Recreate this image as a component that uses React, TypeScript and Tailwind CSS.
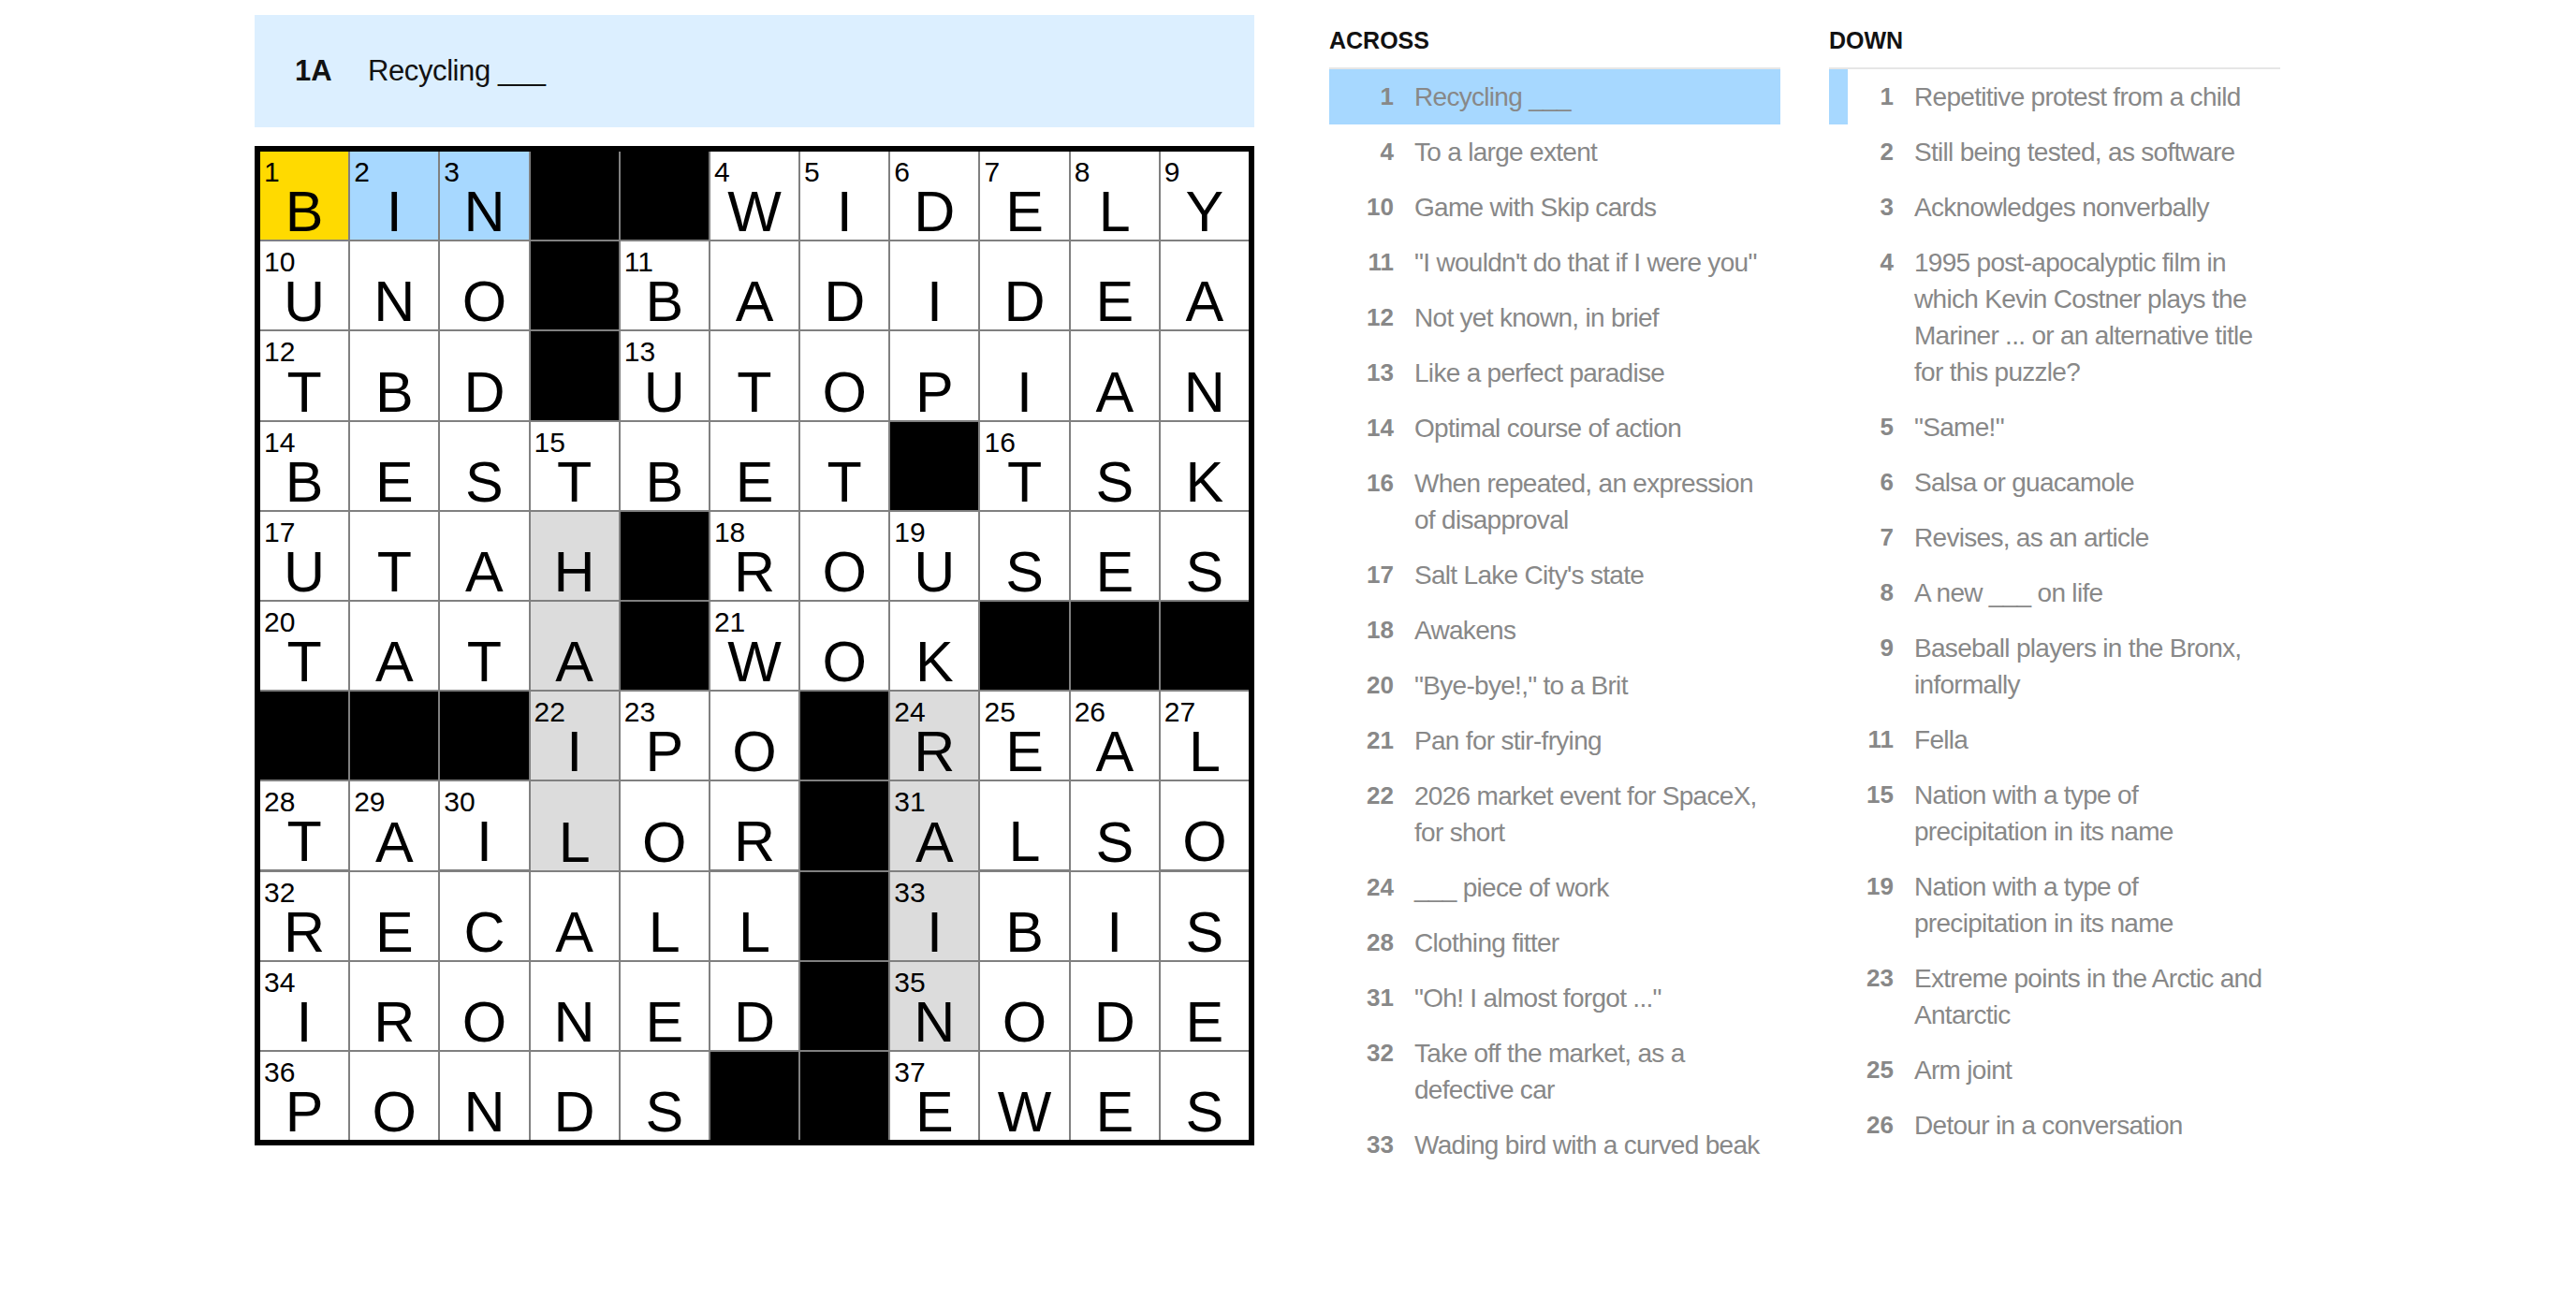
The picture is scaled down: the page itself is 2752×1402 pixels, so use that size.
import React from 'react';

type Clue = { num: number; text: string };

const ROWS = [
  'BIN##WIDELY',
  'UNO#BADIDEA',
  'TBD#UTOPIAN',
  'BESTBET#TSK',
  'UTAH#ROUSES',
  'TATA#WOK###',
  '###IPO#REAL',
  'TAILOR#ALSO',
  'RECALL#IBIS',
  'IRONED#NODE',
  'PONDS##EWES',
];

// shaded squares, as row-col
const SHADED = ['4-3', '5-3', '6-3', '7-3', '6-7', '7-7', '8-7', '9-7'];
const SELECTED = '0-0';
const WORD = ['0-1', '0-2'];

const ACROSS: Clue[] = [
  { num: 1, text: 'Recycling ___' },
  { num: 4, text: 'To a large extent' },
  { num: 10, text: 'Game with Skip cards' },
  { num: 11, text: '"I wouldn\'t do that if I were you"' },
  { num: 12, text: 'Not yet known, in brief' },
  { num: 13, text: 'Like a perfect paradise' },
  { num: 14, text: 'Optimal course of action' },
  { num: 16, text: 'When repeated, an expression of disapproval' },
  { num: 17, text: "Salt Lake City's state" },
  { num: 18, text: 'Awakens' },
  { num: 20, text: '"Bye-bye!," to a Brit' },
  { num: 21, text: 'Pan for stir-frying' },
  { num: 22, text: '2026 market event for SpaceX, for short' },
  { num: 24, text: '___ piece of work' },
  { num: 28, text: 'Clothing fitter' },
  { num: 31, text: '"Oh! I almost forgot ..."' },
  { num: 32, text: 'Take off the market, as a defective car' },
  { num: 33, text: 'Wading bird with a curved beak' },
];

const DOWN: Clue[] = [
  { num: 1, text: 'Repetitive protest from a child' },
  { num: 2, text: 'Still being tested, as software' },
  { num: 3, text: 'Acknowledges nonverbally' },
  { num: 4, text: '1995 post-apocalyptic film in which Kevin Costner plays the Mariner ... or an alternative title for this puzzle?' },
  { num: 5, text: '"Same!"' },
  { num: 6, text: 'Salsa or guacamole' },
  { num: 7, text: 'Revises, as an article' },
  { num: 8, text: 'A new ___ on life' },
  { num: 9, text: 'Baseball players in the Bronx, informally' },
  { num: 11, text: 'Fella' },
  { num: 15, text: 'Nation with a type of precipitation in its name' },
  { num: 19, text: 'Nation with a type of precipitation in its name' },
  { num: 23, text: 'Extreme points in the Arctic and Antarctic' },
  { num: 25, text: 'Arm joint' },
  { num: 26, text: 'Detour in a conversation' },
];

const isBlock = (r: number, c: number) =>
  r < 0 || c < 0 || r >= ROWS.length || c >= ROWS[0].length || ROWS[r][c] === '#';

// standard numbering: a square gets a number when it starts an across or down entry
function numberGrid() {
  const nums: Record<string, number> = {};
  let n = 1;
  ROWS.forEach((row, r) => {
    row.split('').forEach((_, c) => {
      if (isBlock(r, c)) return;
      const across = isBlock(r, c - 1) && !isBlock(r, c + 1);
      const down = isBlock(r - 1, c) && !isBlock(r + 1, c);
      if (across || down) nums[`${r}-${c}`] = n++;
    });
  });
  return nums;
}

function Cell({ r, c, num }: { r: number; c: number; num?: number }) {
  const ch = ROWS[r][c];
  if (ch === '#') return <div className="aspect-square bg-black" />;
  const key = `${r}-${c}`;
  let bg = 'bg-white';
  if (SHADED.includes(key)) bg = 'bg-[#dcdcdc]';
  if (WORD.includes(key)) bg = 'bg-[#a7d8ff]';
  if (key === SELECTED) bg = 'bg-[#ffda00]';
  return (
    <div className={`relative aspect-square ${bg} flex items-end justify-center`}>
      {num && (
        <span className="absolute left-[4px] top-[7px] text-[30px] leading-[30px] text-black">{num}</span>
      )}
      <span className="text-[61px] leading-[60px] text-black">{ch}</span>
    </div>
  );
}

function ClueList({ title, clues, active, full }: { title: string; clues: Clue[]; active: number; full: boolean }) {
  return (
    <div className="w-[482px] h-[1229px] overflow-hidden">
      <div className="h-[56px] flex items-center text-[25px] font-bold text-[#121212]">{title}</div>
      <ul className="border-t-2 border-[#e6e6e6]">
        {clues.map(cl => {
          const on = cl.num === active;
          const rowCls = on
            ? full
              ? 'bg-[#a7d8ff] border-[#a7d8ff]'
              : 'border-[#a7d8ff]'
            : 'border-transparent';
          return (
            <li key={cl.num} className={`flex border-l-[20px] py-[10px] ${rowCls}`}>
              <span className="w-[49px] shrink-0 text-right text-[26px] leading-[39px] font-bold text-[#888888]">
                {cl.num}
              </span>
              <span className="ml-[22px] pr-[10px] flex-1 text-[28px] leading-[39px] tracking-[-0.7px] text-[#888888]">
                {cl.text}
              </span>
            </li>
          );
        })}
      </ul>
    </div>
  );
}

export default function App() {
  const nums = numberGrid();
  return (
    <div className="min-h-screen bg-white [font-family:'Liberation_Sans',Arial,sans-serif]">
      <div className="flex items-start pl-[272px] pt-[16px]">
        <div className="w-[1068px] shrink-0">
          <div className="h-[120px] bg-[#dcefff] flex items-center pl-[43px] text-[31px] text-[#121212]">
            <span className="w-[78px] font-bold">1A</span>
            <span className="tracking-[-0.4px]">Recycling ___</span>
          </div>
          <div className="mt-[20px] w-[1068px] border-[6px] border-black">
            <div className="grid grid-cols-11 gap-[2px] bg-[#808080]">
              {ROWS.map((row, r) =>
                row.split('').map((_, c) => <Cell key={`${r}-${c}`} r={r} c={c} num={nums[`${r}-${c}`]} />)
              )}
            </div>
          </div>
        </div>
        <div className="ml-[80px] flex gap-[52px] items-start">
          <ClueList title="ACROSS" clues={ACROSS} active={1} full />
          <ClueList title="DOWN" clues={DOWN} active={1} full={false} />
        </div>
      </div>
    </div>
  );
}
